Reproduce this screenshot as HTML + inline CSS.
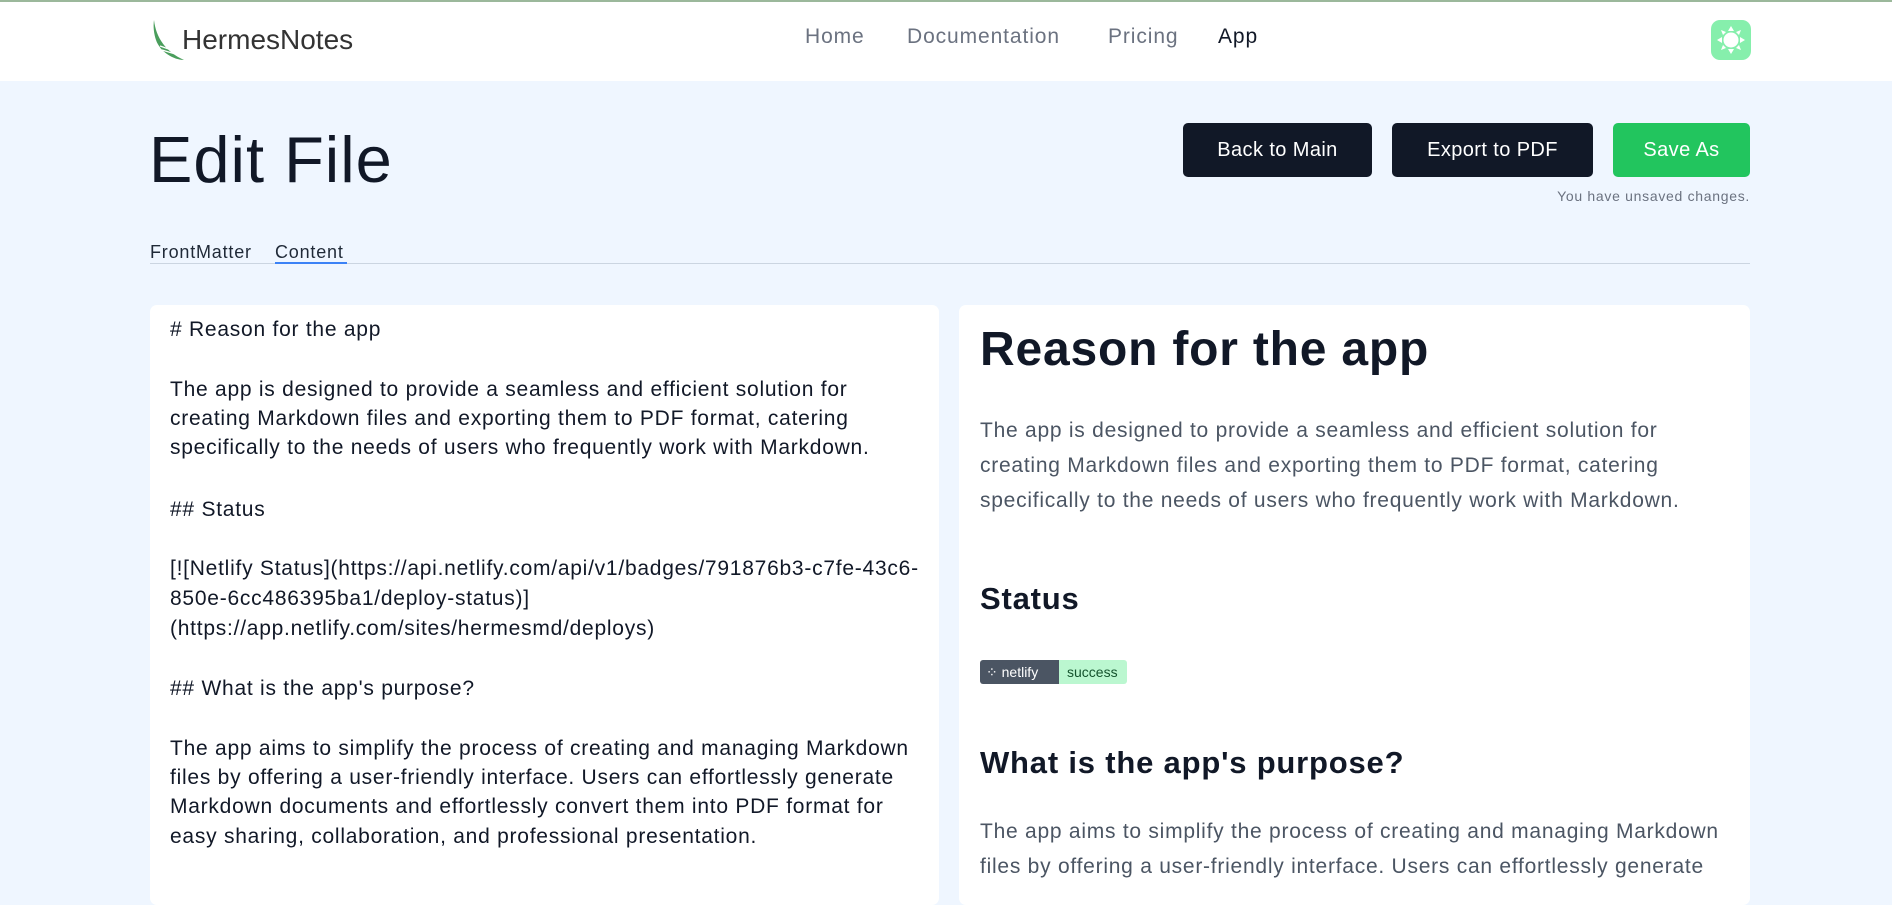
<!DOCTYPE html>
<html><head><meta charset="utf-8"><style>
*{margin:0;padding:0;box-sizing:border-box}
body{width:1892px;height:885px;overflow:hidden;background:#eff6ff;font-family:"Liberation Sans",sans-serif;position:relative;color:#111827}
.hdr{position:absolute;left:0;top:0;width:1892px;height:81px;background:#fff;border-top:2px solid #9bb89b}
.abs{position:absolute;white-space:nowrap}
.nav{top:25px;font-size:21px;color:#6b7280;letter-spacing:0.9px}
.btn{position:absolute;top:123px;height:54px;border-radius:5px;color:#fff;font-size:20px;letter-spacing:0.4px;display:flex;align-items:center;justify-content:center}
.panel{position:absolute;top:305px;height:600px;background:#fff;border-radius:7px}
.lt{position:absolute;left:170px;font-size:21px;letter-spacing:0.75px;color:#111827;white-space:nowrap}
.rp{position:absolute;left:980px;font-size:21px;letter-spacing:0.75px;color:#4b5563;white-space:nowrap;line-height:35px}
h1,h2{position:absolute;left:980px;white-space:nowrap;color:#111827;font-weight:bold}
</style></head><body>
<div class="hdr"></div>
<svg class="abs" style="left:152px;top:20px" width="34" height="42" viewBox="0 0 34 42"><path d="M2 0 C4 18 14 32 32 40 C22 40 8 32 4 20 C2 14 1 7 2 0Z" fill="#4a9e5c"/><path d="M10 30 L30 36 M8 26 L28 33" stroke="#fff" stroke-width="1.2"/></svg>
<div class="abs" style="left:182px;top:24px;font-size:28px;color:#333">HermesNotes</div>
<div class="abs nav" style="left:805px">Home</div>
<div class="abs nav" style="left:907px">Documentation</div>
<div class="abs nav" style="left:1108px">Pricing</div>
<div class="abs nav" style="left:1218px;color:#111827">App</div>
<div class="abs" style="left:1711px;top:20px;width:40px;height:40px;border-radius:9px;background:#86efac"></div>
<svg class="abs" style="left:1711px;top:20px" width="40" height="40" viewBox="0 0 40 40"><circle cx="20" cy="20" r="7.5" fill="#fff"/><g fill="#fff"><polygon points="20,6 17,11 23,11"/><polygon points="20,34 17,29 23,29"/><polygon points="6,20 11,17 11,23"/><polygon points="34,20 29,17 29,23"/><polygon points="10,10 15,12 12,15"/><polygon points="30,10 28,15 25,12"/><polygon points="10,30 12,25 15,28"/><polygon points="30,30 25,28 28,25"/></g></svg>
<div class="abs" style="left:149px;top:122px;font-size:65px;font-weight:300;letter-spacing:1px;color:#111827">Edit File</div>
<div class="btn" style="left:1183px;width:189px;background:#111827">Back to Main</div>
<div class="btn" style="left:1392px;width:201px;background:#111827">Export to PDF</div>
<div class="btn" style="left:1613px;width:137px;background:#22c55e">Save As</div>
<div class="abs" style="right:142px;top:188px;font-size:14px;letter-spacing:0.7px;color:#6b7280">You have unsaved changes.</div>
<div class="abs" style="left:150px;top:242px;font-size:18px;letter-spacing:0.8px;color:#1f2937">FrontMatter</div>
<div class="abs" style="left:275px;top:242px;font-size:18px;letter-spacing:0.8px;color:#1f2937">Content</div>
<div class="abs" style="left:150px;top:263px;width:1600px;height:1px;background:#cbd5e1"></div>
<div class="abs" style="left:275px;top:262px;width:72px;height:2px;background:#3b82f6"></div>
<div class="panel" style="left:150px;width:789px"></div>
<div class="panel" style="left:959px;width:791px"></div>
<div class="lt" style="top:318px"># Reason for the app</div>
<div class="lt" style="top:378px">The app is designed to provide a seamless and efficient solution for</div>
<div class="lt" style="top:407px">creating Markdown files and exporting them to PDF format, catering</div>
<div class="lt" style="top:436px">specifically to the needs of users who frequently work with Markdown.</div>
<div class="lt" style="top:498px">## Status</div>
<div class="lt" style="top:557px">[![Netlify Status](https://api.netlify.com/api/v1/badges/791876b3-c7fe-43c6-</div>
<div class="lt" style="top:587px">850e-6cc486395ba1/deploy-status)]</div>
<div class="lt" style="top:617px">(https://app.netlify.com/sites/hermesmd/deploys)</div>
<div class="lt" style="top:677px">## What is the app's purpose?</div>
<div class="lt" style="top:737px">The app aims to simplify the process of creating and managing Markdown</div>
<div class="lt" style="top:766px">files by offering a user-friendly interface. Users can effortlessly generate</div>
<div class="lt" style="top:795px">Markdown documents and effortlessly convert them into PDF format for</div>
<div class="lt" style="top:825px">easy sharing, collaboration, and professional presentation.</div>
<h1 style="top:322px;font-size:48px;letter-spacing:0.8px">Reason for the app</h1>
<div class="rp" style="top:413px">The app is designed to provide a seamless and efficient solution for<br>creating Markdown files and exporting them to PDF format, catering<br>specifically to the needs of users who frequently work with Markdown.</div>
<h2 style="top:581px;font-size:31px;letter-spacing:0.8px">Status</h2>
<div class="abs" style="left:980px;top:660px;height:24px;width:147px;border-radius:3px;overflow:hidden;display:flex;font-size:14px">
<div style="background:#4b5563;color:#fff;width:79px;display:flex;align-items:center;padding-left:6px">⁘ netlify</div>
<div style="background:#bbf7d0;color:#14532d;flex:1;display:flex;align-items:center;padding-left:8px">success</div></div>
<h2 style="top:745px;font-size:31px;letter-spacing:0.8px">What is the app's purpose?</h2>
<div class="rp" style="top:814px">The app aims to simplify the process of creating and managing Markdown<br>files by offering a user-friendly interface. Users can effortlessly generate</div>
</body></html>
